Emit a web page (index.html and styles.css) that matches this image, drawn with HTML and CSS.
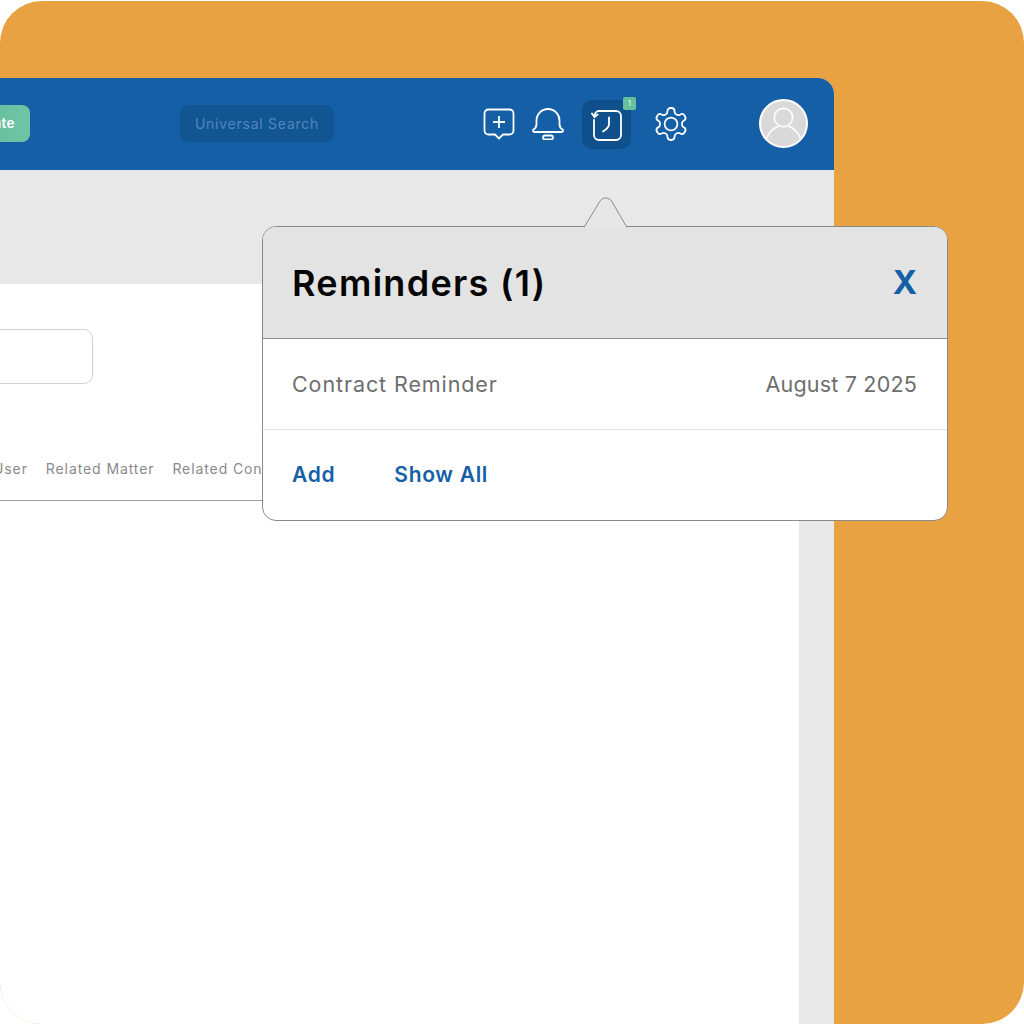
FILE: index.html
```html
<!DOCTYPE html>
<html lang="en">
<head>
<meta charset="utf-8">
<title>Reminders</title>
<link rel="stylesheet" href="styles.css">
</head>
<body>
<div class="canvas">
  <div class="app">
    <header class="topbar">
      <button class="update">Update</button>
      <div class="search">Universal Search</div>
      <div class="icons">
        <svg class="icon i-plus" viewBox="0 0 32 32" fill="none"><path d="M5.500 1.500h21a4 4 0 0 1 4 4v17a4 4 0 0 1-4 4h-6.500l-4 4-4-4H5.500a4 4 0 0 1-4-4v-17a4 4 0 0 1 4-4Z"/><path d="M16 8v12M10 14h12"/></svg>
        <svg class="icon i-bell" viewBox="0 0 32 32" fill="none"><path d="M4.500 16V12.500a11.500 11.500 0 0 1 23 0V16c0 3 1 4.500 3 5.500 1 .6 .6 2.500-1 2.500H2.500c-1.600 0-2-1.900-1-2.500C3.500 20.500 4.500 19 4.500 16Z"/><rect x="11" y="27.500" width="10" height="4" rx="2"/></svg>
        <div class="clock-btn">
          <svg class="clock" viewBox="0 0 32 32" fill="none"><path d="M7 2h18a5 5 0 0 1 5 5v19a5 5 0 0 1-5 5H8a5 5 0 0 1-5-5V11"/><path d="M7 2C5 2.500 4 4 3.500 6.500"/><path d="M1 4.500l2.500 3.500 3-2.500" stroke-width="2"/><path d="M18 8.500v7c0 2.500-3 5-6 7"/></svg>
          <span class="badge">1</span>
        </div>
        <svg class="icon i-gear" viewBox="2 2 20 20" fill="none"><path d="M12.220 2h-.44a2 2 0 0 0-2 2v.18a2 2 0 0 1-1 1.730l-.43.25a2 2 0 0 1-2 0l-.15-.08a2 2 0 0 0-2.730.73l-.22.38a2 2 0 0 0 .73 2.730l.15.1a2 2 0 0 1 1 1.720v.51a2 2 0 0 1-1 1.740l-.15.09a2 2 0 0 0-.73 2.730l.22.38a2 2 0 0 0 2.730.73l.15-.08a2 2 0 0 1 2 0l.43.25a2 2 0 0 1 1 1.730V20a2 2 0 0 0 2 2h.44a2 2 0 0 0 2-2v-.18a2 2 0 0 1 1-1.730l.43-.25a2 2 0 0 1 2 0l.15.08a2 2 0 0 0 2.730-.73l.22-.39a2 2 0 0 0-.73-2.730l-.15-.08a2 2 0 0 1-1-1.740v-.5a2 2 0 0 1 1-1.740l.15-.09a2 2 0 0 0 .73-2.730l-.22-.38a2 2 0 0 0-2.730-.73l-.15.08a2 2 0 0 1-2 0l-.43-.25a2 2 0 0 1-1-1.730V4a2 2 0 0 0-2-2z"/><circle cx="12" cy="12" r="4"/></svg>
      </div>
      <div class="avatar">
        <svg viewBox="0 0 49 49" fill="none"><circle cx="24.500" cy="18" r="10"/><path d="M6 41c3-9 9-12 13-13.500M43 41c-3-9-9-12-13-13.500"/></svg>
      </div>
    </header>
    <div class="body">
      <div class="content">
        <div class="field"></div>
        <nav class="tabs">
          <span>User</span>
          <span>Related Matter</span>
          <span>Related Contract</span>
        </nav>
      </div>
    </div>
  </div>

  <section class="popover">
    <svg class="arrow" viewBox="0 0 44 31" fill="none"><path class="arrow-fill" d="M0 31 16 4c2.500-4 9-4 11.500 0L43 31Z"/><path class="arrow-line" d="M0 30.500 16 4c2.500-4 9-4 11.500 0L43 30.500"/></svg>
    <div class="pop-head">
      <h1>Reminders (1)</h1>
      <span class="close">X</span>
    </div>
    <div class="pop-row">
      <span class="pop-name">Contract Reminder</span>
      <span class="pop-date">August 7 2025</span>
    </div>
    <div class="pop-foot">
      <a>Add</a>
      <a>Show All</a>
    </div>
  </section>
</div>
</body>
</html>
```
FILE: styles.css
```css
* { box-sizing: border-box; }
html, body { margin: 0; height: 100%; background: #fff; overflow: hidden; }
body { font-family: Inter, "Open Sans", "Liberation Sans", sans-serif; }

.canvas {
  position: relative;
  width: 1024px;
  height: 1023px;
  margin-top: 1px;
  padding: 77px 190px 0 0;
  background: #e8a241;
  border-radius: 42px;
  overflow: hidden;
}

.app {
  display: flex;
  flex-direction: column;
  height: 100%;
  background: #e8e8e8;
  border-radius: 0 16px 0 0;
  overflow: hidden;
}

.topbar {
  flex: 0 0 92px;
  display: flex;
  align-items: center;
  justify-content: flex-end;
  padding: 0 26px 2px 0;
  background: #145fa6;
}

.update {
  flex: none;
  height: 37px;
  margin-right: 150px;
  padding: 0 15px;
  border: 0;
  border-radius: 8px;
  background: linear-gradient(90deg, #5fb8a0, #6fc5a3);
  color: #fff;
  font: 600 13.500px Inter, sans-serif;
  letter-spacing: .4px;
}

.search {
  flex: none;
  width: 154px;
  height: 37px;
  margin-right: 149px;
  border-radius: 8px;
  background: #115592;
  color: #5288bf;
  font-size: 14px;
  line-height: 37px;
  text-align: center;
  letter-spacing: .75px;
}

.icons {
  flex: none;
  display: flex;
  align-items: center;
  margin: 2px 72px 0 0;
}

.icon { display: block; stroke: #fff; stroke-width: 1.800; }
.i-plus { width: 32px; height: 32px; margin-right: 17px; }
.i-bell { width: 32px; height: 32px; margin-right: 18px; }
.i-gear { width: 32px; height: 32px; margin-left: 24px; stroke-width: 1.100; overflow: visible; }

.clock-btn {
  position: relative;
  display: flex;
  align-items: center;
  justify-content: center;
  width: 49px;
  height: 49px;
  padding-top: 2px;
  border-radius: 10px;
  background: #0f4f8b;
}
.clock { width: 32px; height: 32px; stroke: #fff; stroke-width: 1.800; stroke-linecap: round; }
.badge {
  position: absolute;
  top: -3px;
  right: -5px;
  width: 13px;
  height: 13px;
  border-radius: 2px;
  background: #66c09e;
  color: #fff;
  font-size: 7px;
  line-height: 13px;
  text-align: center;
}

.avatar {
  flex: none;
  width: 49px;
  height: 49px;
  border: 2px solid #fff;
  border-radius: 50%;
  background: #d9d9d9;
  overflow: hidden;
}
.avatar svg {
  display: block;
  width: 45px;
  height: 45px;
  stroke: #fff;
  stroke-width: 1.800;
}

.body {
  flex: 1;
  padding: 113px 35px 0 0;
  border-top: 1px solid #dfe6ec;
}

.content {
  height: 100%;
  padding-top: 45px;
  background: #fff;
}

.field {
  width: 93px;
  height: 55px;
  border: 1px solid #d2d2d2;
  border-left: 0;
  border-radius: 0 9px 9px 0;
}

.tabs {
  display: flex;
  gap: 18px;
  height: 117px;
  padding-top: 75px;
  margin-left: -7px;
  border-bottom: 1px solid #9a9a9a;
  color: #8a8a8a;
  font-size: 14px;
  letter-spacing: .9px;
  line-height: 20px;
  white-space: nowrap;
}

.popover {
  position: absolute;
  top: 225px;
  left: 262px;
  width: 686px;
  border: 1px solid #8a8a8a;
  border-radius: 14px;
  background: #fff;
}

.arrow {
  position: absolute;
  top: -30px;
  left: 321px;
  width: 44px;
  height: 31px;
}
.arrow-fill { fill: #e7e7e7; }
.arrow-line { stroke: #8a8a8a; stroke-width: 1; }

.pop-head {
  display: flex;
  align-items: center;
  justify-content: space-between;
  height: 112px;
  padding: 0 30px 0 29px;
  border-bottom: 1px solid #8f8f8f;
  border-radius: 13px 13px 0 0;
  background: #e3e3e3;
}
.pop-head h1 {
  margin: 0;
  color: #050505;
  font-size: 36px;
  font-weight: 600;
  letter-spacing: 1.300px;
  line-height: 1;
}
.close {
  color: #145fa6;
  font-size: 33px;
  font-weight: 700;
  line-height: 1;
}

.pop-row {
  display: flex;
  align-items: center;
  justify-content: space-between;
  height: 91px;
  padding: 0 30px 0 29px;
  border-bottom: 1px solid #e0e0e0;
  color: #6e6e6e;
  font-size: 21.500px;
}
.pop-name { letter-spacing: .9px; }
.pop-date { letter-spacing: .2px; }

.pop-foot {
  display: flex;
  align-items: center;
  gap: 59px;
  height: 90px;
  padding: 0 29px 2px;
  color: #145fa6;
  font-size: 21px;
  font-weight: 600;
  letter-spacing: .7px;
}
```
